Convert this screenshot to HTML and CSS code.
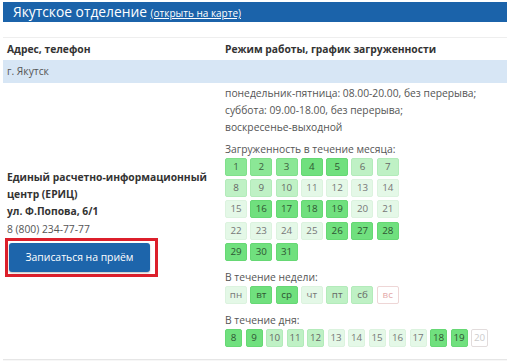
FILE: index.html
```html
<!DOCTYPE html>
<html lang="ru">
<head>
  <meta charset="UTF-8">
  <title>Якутское отделение</title>
  <meta name="viewport" content="width=device-width, initial-scale=1">
  <link rel="stylesheet" href="styles.css">
</head>
<body>
  <div class="office">
    <h2 class="office-title">Якутское отделение <a href="#">(открыть на карте)</a></h2>

    <table class="office-table">
      <thead>
        <tr>
          <th class="col-addr">Адрес, телефон</th>
          <th>Режим работы, график загруженности</th>
        </tr>
      </thead>
      <tbody>
        <tr class="city-row">
          <td colspan="2">г. Якутск</td>
        </tr>
        <tr>
          <td class="addr">
            <div class="addr-name">Единый расчетно-информационный центр (ЕРИЦ)<br>ул. Ф.Попова, 6/1</div>
            <div class="addr-phone">8 (800) 234-77-77</div>
            <div class="highlight">
              <button type="button" class="btn-book">Записаться на приём</button>
            </div>
          </td>
          <td class="schedule">
            <div class="hours">
              понедельник-пятница: 08.00-20.00, без перерыва;<br>
              суббота: 09.00-18.00, без перерыва;<br>
              воскресенье-выходной
            </div>

            <div class="load-title">Загруженность в течение месяца:</div>
            <div class="load-grid month" id="month"></div>

            <div class="load-title">В течение недели:</div>
            <div class="load-grid week" id="week"></div>

            <div class="load-title">В течение дня:</div>
            <div class="load-row day" id="day"></div>
          </td>
        </tr>
      </tbody>
    </table>
    <div class="next-block"></div>
  </div>

  <script>
    // load levels: 0 - closed, 1 - low ... 4 - high
    const monthLoad = [3,3,3,4,4,2,2, 2,2,2,1,1,1,1, 1,4,4,4,4,1,1, 1,1,1,1,4,4,4, 4,4,4];
    const weekLoad = [
      ['пн', 1], ['вт', 4], ['ср', 4], ['чт', 1], ['пт', 2], ['сб', 2], ['вс', 0]
    ];
    const dayLoad = [
      [8, 4], [9, 4], [10, 2], [11, 2], [12, 2], [13, 1], [14, 1],
      [15, 1], [16, 1], [17, 1], [18, 4], [19, 4], [20, 0]
    ];

    function cell(text, level) {
      return `<span class="load load-${level}">${text}</span>`;
    }

    document.getElementById('month').innerHTML =
      monthLoad.map((lvl, i) => cell(i + 1, lvl)).join('');
    document.getElementById('week').innerHTML =
      weekLoad.map(d => cell(d[0], d[1])).join('');
    document.getElementById('day').innerHTML =
      dayLoad.map(h => cell(h[0], h[1])).join('');
  </script>
</body>
</html>
```

FILE: styles.css
```css
* {
  box-sizing: border-box;
}

body {
  margin: 0;
  padding: 2px 6px 0 3px;
  font-family: "Open Sans", sans-serif;
  font-size: 10.3px;
  color: #555;
  background: #fff;
}

.office-title {
  margin: 0 0 15px;
  padding: 0 10px;
  height: 20px;
  line-height: 20px;
  font-size: 13.8px;
  font-weight: normal;
  color: #fff;
  background: #1b63aa;
}

.office-title a {
  font-size: 10px;
  color: #fff;
}

.office-table {
  width: 100%;
  border-collapse: collapse;
}

.office-table th {
  text-align: left;
  font-weight: bold;
  color: #333;
  padding: 0 4px;
  height: 22px;
  border-top: 1px solid #eee;
}

.col-addr {
  width: 218px;
}

.city-row td {
  background: #d7e6f5;
  padding: 0 4px;
  height: 23px;
  color: #555;
}

.addr {
  vertical-align: middle;
  padding: 4px 4px 0;
  color: #333;
}

.addr-name {
  font-weight: bold;
  line-height: 17px;
}

.addr-phone {
  line-height: 17px;
  margin-top: 1px;
  color: #555;
}

.highlight {
  display: inline-block;
  margin-left: -2px;
  padding: 2px 5px 2px 1px;
  border: 3px solid #dc1f2b;
}

.btn-book {
  display: block;
  width: 141px;
  height: 29px;
  padding: 0;
  border: none;
  border-radius: 3px;
  background: #1d65ab;
  color: #fff;
  font-family: inherit;
  font-size: 10.4px;
  box-shadow: 0 1px 2px rgba(0, 0, 0, 0.25);
  cursor: pointer;
}

.schedule {
  vertical-align: top;
  padding: 2px 4px 12px;
}

.hours {
  line-height: 17px;
  margin-bottom: 5px;
}

.load-title {
  line-height: 17px;
}

.load-grid {
  display: grid;
  grid-template-columns: repeat(7, 22px);
  gap: 3.4px 3.3px;
  margin-bottom: 8px;
}

.load-row {
  display: flex;
  gap: 3.5px;
}

.load {
  display: block;
  height: 18px;
  line-height: 16px;
  text-align: center;
  font-size: 9.8px;
  border: 1px solid transparent;
  border-radius: 2px;
}

.day .load {
  width: 17px;
}

.load-0 {
  background: #fff;
  border-color: #eed6d6;
  color: #e4aaaa;
}

.day .load-0 {
  border-color: #e2dcdc;
  color: #ccc;
}

.load-1 {
  background: #e4f8e7;
  border-color: #dcf3df;
  color: #777;
}

.load-2 {
  background: #bff1c5;
  border-color: #b3ebba;
  color: #666;
}

.load-3 {
  background: #8be796;
  border-color: #80e08b;
  color: #3d5e40;
}

.load-4 {
  background: #70e07e;
  border-color: #66d874;
  color: #2f5533;
}

.next-block {
  height: 10px;
  border-top: 1px solid #e6e6e6;
  background: #f7f7f7;
}
```
